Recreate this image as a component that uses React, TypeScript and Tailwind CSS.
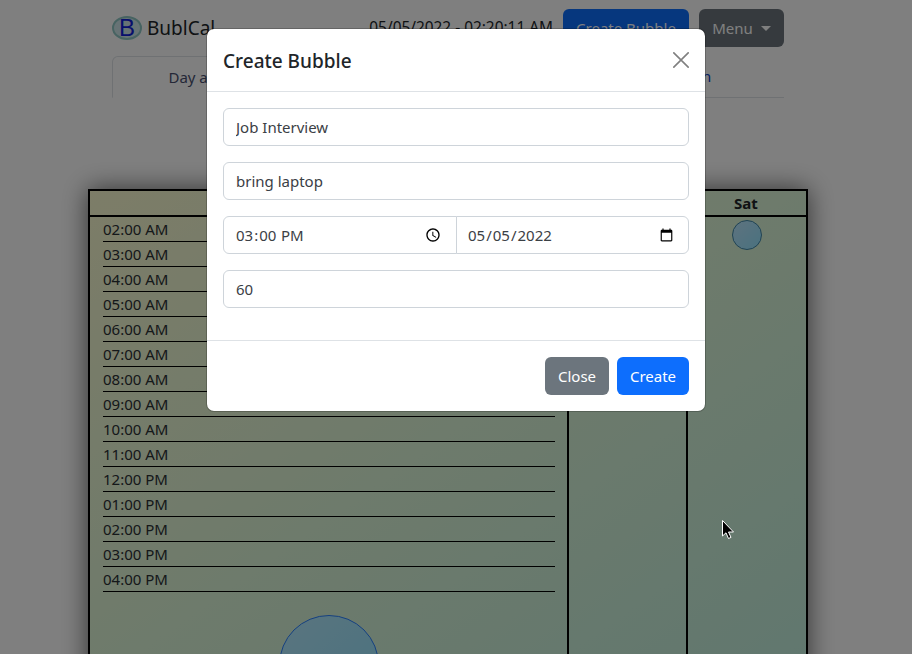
const hours = ["02:00 AM","03:00 AM","04:00 AM","05:00 AM","06:00 AM","07:00 AM","08:00 AM","09:00 AM","10:00 AM","11:00 AM","12:00 PM","01:00 PM","02:00 PM","03:00 PM","04:00 PM"];

const inputCls = "block h-[38px] border border-[#ced4da] bg-white text-[15px] text-[#3b4045] outline-none";

export default function App() {
  return (
    <div className="relative h-[654px] w-[912px] overflow-hidden bg-white text-[#212529] font-['Noto_Sans',sans-serif]">
      <div className="w-[896px] pt-[9px]">
        <div className="mx-auto w-[672px]">
          <div className="flex h-[38px] items-center">
            <div className="flex h-[24px] w-[30px] items-center justify-center rounded-[50%] border-2 border-[#8fc7c4] bg-[#cfe6ea] text-[24px] leading-none text-[#1020d8] font-['Liberation_Sans',sans-serif]">B</div>
            <span className="ml-[5px] text-[19px]">BublCal</span>
            <span className="ml-auto text-[15.4px]">05/05/2022 - 02:20:11 AM</span>
            <button className="ml-[10px] h-[38px] w-[126px] rounded-[6px] bg-[#0d6efd] text-[15px] text-white">Create Bubble</button>
            <button className="ml-[10px] flex h-[38px] w-[85px] items-center justify-center rounded-[6px] bg-[#6c757d] text-[15px] text-white">
              Menu
              <span className="ml-[8px] h-0 w-0 border-x-[5px] border-t-[5px] border-x-transparent border-t-white" />
            </button>
          </div>
          <div className="mt-[9px] flex h-[42px] border-b border-[#dee2e6] text-[15px] text-[#0a3fbf]">
            <div className="flex h-[42px] w-[224px] items-center justify-center rounded-t-[6px] border border-b-white border-[#dee2e6] pr-[2px] text-[#495070]">Day at a Glance</div>
            <div className="flex w-[224px] items-center justify-center">Week at a Glance</div>
            <div className="flex w-[224px] items-center justify-center pr-[6px]">Bubble Plan</div>
          </div>
        </div>
        <div className="mx-auto mt-[91px] h-[600px] w-[720px] border-2 border-black bg-[linear-gradient(145deg,#fafad0_0%,#dcf6d8_45%,#bceee0_100%)] shadow-[0_0_24px_rgba(0,0,0,0.6)]">
          <div className="flex h-[26px] border-b-2 border-black text-[15px] font-bold">
            <div className="flex w-[477px] items-center justify-center">Thu</div>
            <div className="flex w-[119px] items-center justify-center border-l-2 border-black">Fri</div>
            <div className="flex flex-1 items-center justify-center border-l-2 border-black pr-[2px]">Sat</div>
          </div>
          <div className="flex h-[600px]">
            <div className="w-[477px] pl-[13px] pr-[12px]">
              {hours.map((h) => (
                <div key={h} className="h-[25px] border-b border-black text-[15px] leading-[24px] text-[#2b3035]">{h}</div>
              ))}
              <div className="mx-auto mt-[23px] h-[100px] w-[100px] rounded-full border border-[#2a80ff] bg-[linear-gradient(135deg,#b4eaff,#94e4ff)]" />
            </div>
            <div className="w-[119px] border-l-2 border-black" />
            <div className="flex-1 border-l-2 border-black pt-[3px]">
              <div className="mx-auto h-[30px] w-[30px] rounded-full border border-[#3f86a8] bg-[linear-gradient(135deg,#bce6ff,#94e4ff)]" />
            </div>
          </div>
        </div>
      </div>

      <div className="absolute inset-0 bg-black/50" />

      <div className="absolute left-[206px] top-[28px] w-[500px] rounded-[8px] border border-black/20 bg-white bg-clip-padding">
        <div className="flex h-[63px] items-center justify-between border-b border-[#dee2e6] px-4">
          <span className="pt-[2px] text-[19px] font-medium leading-none">Create Bubble</span>
          <svg width="16" height="16" viewBox="0 0 16 16">
            <path d="M0.3 0.3L15.7 15.7M15.7 0.3L0.3 15.7" stroke="#808080" strokeWidth="1.6" fill="none" />
          </svg>
        </div>
        <div className="flex flex-col gap-4 p-4 pb-8">
          <input defaultValue="Job Interview" className={`${inputCls} w-full rounded-[6px] px-3`} />
          <input defaultValue="bring laptop" className={`${inputCls} w-full rounded-[6px] px-3`} />
          <div className="flex">
            <input type="time" defaultValue="15:00" className={`${inputCls} w-[234px] flex-none rounded-l-[6px] pl-[11px] pr-[12px]`} />
            <input type="date" defaultValue="2022-05-05" className={`${inputCls} -ml-px w-[233px] flex-none rounded-r-[6px] pl-[10px] pr-[12px] text-[14.7px]`} />
          </div>
          <input defaultValue="60" className={`${inputCls} w-full rounded-[6px] px-3`} />
        </div>
        <div className="flex justify-end gap-2 border-t border-[#dee2e6] p-4">
          <button className="h-[38px] w-[64px] rounded-[6px] bg-[#6c757d] text-[15px] text-white">Close</button>
          <button className="h-[38px] w-[72px] rounded-[6px] bg-[#0d6efd] text-[15px] text-white">Create</button>
        </div>
      </div>

      <svg className="absolute left-[722px] top-[520px]" width="12" height="20" viewBox="0 0 12 20">
        <path d="M0.5 0.5V16L4 12.8L6.5 18.5L9 17.4L6.5 12H11.5Z" fill="#000" stroke="#fff" strokeWidth="1" />
      </svg>
    </div>
  );
}
